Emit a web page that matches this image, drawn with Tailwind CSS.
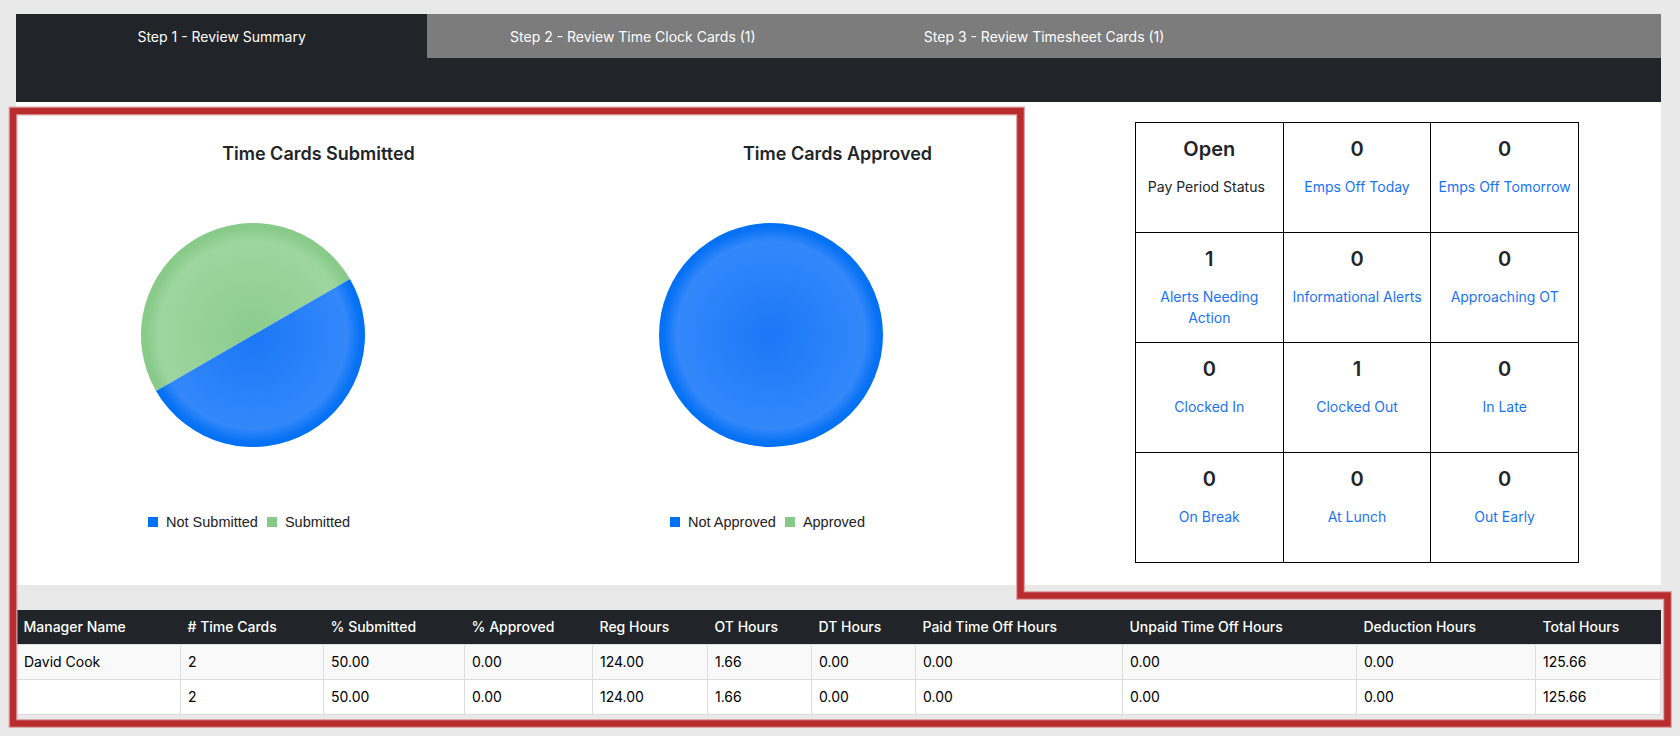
<!DOCTYPE html>
<html lang="en">
<head>
    <meta charset="UTF-8">
    <title>Review Summary</title>
    <script src="https://cdn.jsdelivr.net/npm/@tailwindcss/browser@4"></script>
</head>
<body class="relative h-[736px] overflow-hidden bg-[#e9e9e9] pl-[16px] pr-[19px] pt-[14px] font-['Inter',sans-serif] text-[14px] text-[#212529]">
    <!-- Steps -->
    <div class="bg-[#212529]">
        <div class="grid h-[44px] grid-cols-4 bg-[#7c7c7c] text-white">
            <div class="flex items-center justify-center bg-[#212529]">Step 1 - Review Summary</div>
            <div class="flex items-center justify-center">Step 2 - Review Time Clock Cards (1)</div>
            <div class="flex items-center justify-center">Step 3 - Review Timesheet Cards (1)</div>
            <div></div>
        </div>
        <div class="h-[44px]"></div>
    </div>

    <!-- Summary panel -->
    <div class="flex h-[483px] bg-white">
        <div class="w-[519px] pt-[41px]">
            <h3 class="pl-[86px] text-center text-[18px] leading-[22px] font-semibold">Time Cards Submitted</h3>
            <svg class="ml-[125px] mt-[58px]" width="224" height="224" viewBox="0 0 224 224">
                <defs>
                    <radialGradient id="blue1" gradientUnits="userSpaceOnUse" cx="112" cy="112" r="112">
                        <stop offset="0" stop-color="#1c77f7"/>
                        <stop offset="0.84" stop-color="#3388fa"/>
                        <stop offset="0.95" stop-color="#0a73f5"/>
                        <stop offset="1" stop-color="#0070f5"/>
                    </radialGradient>
                    <radialGradient id="green1" gradientUnits="userSpaceOnUse" cx="112" cy="112" r="112">
                        <stop offset="0" stop-color="#8bcc8c"/>
                        <stop offset="0.84" stop-color="#9ed6a0"/>
                        <stop offset="0.95" stop-color="#8acb8b"/>
                        <stop offset="1" stop-color="#87ca87"/>
                    </radialGradient>
                </defs>
                <path d="M112 112L209 56A112 112 0 0 0 15 168Z" fill="url(#green1)"/>
                <path d="M112 112L209 56A112 112 0 0 1 15 168Z" fill="url(#blue1)"/>
            </svg>
            <div class="ml-[132px] mt-[65px] flex items-center font-['Liberation_Sans',sans-serif] text-[14.5px] leading-[20px] text-[#222]">
                <span class="mr-[8px] h-[10px] w-[10px] bg-[#0070f5]"></span><span>Not Submitted</span>
                <span class="ml-[9px] mr-[8px] h-[10px] w-[10px] bg-[#87ca87]"></span><span>Submitted</span>
            </div>
        </div>
        <div class="w-[489px] pt-[41px]">
            <h3 class="pl-[116px] text-center text-[18px] leading-[22px] font-semibold">Time Cards Approved</h3>
            <svg class="ml-[124px] mt-[58px]" width="224" height="224" viewBox="0 0 224 224">
                <defs>
                    <radialGradient id="blue2" gradientUnits="userSpaceOnUse" cx="112" cy="112" r="112">
                        <stop offset="0" stop-color="#1c77f7"/>
                        <stop offset="0.84" stop-color="#3388fa"/>
                        <stop offset="0.95" stop-color="#0a73f5"/>
                        <stop offset="1" stop-color="#0070f5"/>
                    </radialGradient>
                </defs>
                <circle cx="112" cy="112" r="112" fill="url(#blue2)"/>
            </svg>
            <div class="ml-[135px] mt-[65px] flex items-center font-['Liberation_Sans',sans-serif] text-[14.5px] leading-[20px] text-[#222]">
                <span class="mr-[8px] h-[10px] w-[10px] bg-[#0070f5]"></span><span>Not Approved</span>
                <span class="ml-[9px] mr-[8px] h-[10px] w-[10px] bg-[#87ca87]"></span><span>Approved</span>
            </div>
        </div>

        <!-- Counts -->
        <div class="ml-[111px] mt-[20px] grid h-[441px] w-[444px] grid-cols-3 grid-rows-4 border-t border-l border-black text-center">
            <div class="border-r border-b border-black px-1 pt-[13px]"><div class="text-[20px] leading-[26px] font-semibold">Open</div><div class="mt-[14px] pr-[6px] leading-[21px]">Pay Period Status</div></div>
            <div class="border-r border-b border-black px-1 pt-[13px]"><div class="text-[20px] leading-[26px] font-semibold">0</div><a class="mt-[14px] block leading-[21px] text-[#1a73f5]">Emps Off Today</a></div>
            <div class="border-r border-b border-black px-1 pt-[13px]"><div class="text-[20px] leading-[26px] font-semibold">0</div><a class="mt-[14px] block leading-[21px] text-[#1a73f5]">Emps Off Tomorrow</a></div>
            <div class="border-r border-b border-black px-1 pt-[13px]"><div class="text-[20px] leading-[26px] font-semibold">1</div><a class="mt-[14px] block leading-[21px] text-[#1a73f5]">Alerts Needing Action</a></div>
            <div class="border-r border-b border-black px-1 pt-[13px]"><div class="text-[20px] leading-[26px] font-semibold">0</div><a class="mt-[14px] block leading-[21px] text-[#1a73f5]">Informational Alerts</a></div>
            <div class="border-r border-b border-black px-1 pt-[13px]"><div class="text-[20px] leading-[26px] font-semibold">0</div><a class="mt-[14px] block leading-[21px] text-[#1a73f5]">Approaching OT</a></div>
            <div class="border-r border-b border-black px-1 pt-[13px]"><div class="text-[20px] leading-[26px] font-semibold">0</div><a class="mt-[14px] block leading-[21px] text-[#1a73f5]">Clocked In</a></div>
            <div class="border-r border-b border-black px-1 pt-[13px]"><div class="text-[20px] leading-[26px] font-semibold">1</div><a class="mt-[14px] block leading-[21px] text-[#1a73f5]">Clocked Out</a></div>
            <div class="border-r border-b border-black px-1 pt-[13px]"><div class="text-[20px] leading-[26px] font-semibold">0</div><a class="mt-[14px] block leading-[21px] text-[#1a73f5]">In Late</a></div>
            <div class="border-r border-b border-black px-1 pt-[13px]"><div class="text-[20px] leading-[26px] font-semibold">0</div><a class="mt-[14px] block leading-[21px] text-[#1a73f5]">On Break</a></div>
            <div class="border-r border-b border-black px-1 pt-[13px]"><div class="text-[20px] leading-[26px] font-semibold">0</div><a class="mt-[14px] block leading-[21px] text-[#1a73f5]">At Lunch</a></div>
            <div class="border-r border-b border-black px-1 pt-[13px]"><div class="text-[20px] leading-[26px] font-semibold">0</div><a class="mt-[14px] block leading-[21px] text-[#1a73f5]">Out Early</a></div>
        </div>
    </div>

    <!-- Manager table -->
    <table class="mt-[25px] w-[1645px] table-fixed border-collapse text-left text-black">
        <thead class="bg-[#212529] text-white">
            <tr class="h-[34px]">
                <th class="w-[164px] px-[7px] font-medium">Manager Name</th>
                <th class="w-[143px] px-[7px] font-medium"># Time Cards</th>
                <th class="w-[141px] px-[7px] font-medium">% Submitted</th>
                <th class="w-[128px] px-[7px] font-medium">% Approved</th>
                <th class="w-[115px] px-[7px] font-medium">Reg Hours</th>
                <th class="w-[104px] px-[7px] font-medium">OT Hours</th>
                <th class="w-[104px] px-[7px] font-medium">DT Hours</th>
                <th class="w-[207px] px-[7px] font-medium">Paid Time Off Hours</th>
                <th class="w-[234px] px-[7px] font-medium">Unpaid Time Off Hours</th>
                <th class="w-[179px] px-[7px] font-medium">Deduction Hours</th>
                <th class="px-[7px] font-medium">Total Hours</th>
            </tr>
        </thead>
        <tbody>
            <tr class="h-[35px] bg-[#f9f9f9]">
                <td class="border border-[#ddd] px-[7px]">David Cook</td>
                <td class="border border-[#ddd] px-[7px]">2</td>
                <td class="border border-[#ddd] px-[7px]">50.00</td>
                <td class="border border-[#ddd] px-[7px]">0.00</td>
                <td class="border border-[#ddd] px-[7px]">124.00</td>
                <td class="border border-[#ddd] px-[7px]">1.66</td>
                <td class="border border-[#ddd] px-[7px]">0.00</td>
                <td class="border border-[#ddd] px-[7px]">0.00</td>
                <td class="border border-[#ddd] px-[7px]">0.00</td>
                <td class="border border-[#ddd] px-[7px]">0.00</td>
                <td class="border border-[#ddd] px-[7px]">125.66</td>
            </tr>
            <tr class="h-[35px] bg-white">
                <td class="border border-[#ddd] px-[7px]"></td>
                <td class="border border-[#ddd] px-[7px]">2</td>
                <td class="border border-[#ddd] px-[7px]">50.00</td>
                <td class="border border-[#ddd] px-[7px]">0.00</td>
                <td class="border border-[#ddd] px-[7px]">124.00</td>
                <td class="border border-[#ddd] px-[7px]">1.66</td>
                <td class="border border-[#ddd] px-[7px]">0.00</td>
                <td class="border border-[#ddd] px-[7px]">0.00</td>
                <td class="border border-[#ddd] px-[7px]">0.00</td>
                <td class="border border-[#ddd] px-[7px]">0.00</td>
                <td class="border border-[#ddd] px-[7px]">125.66</td>
            </tr>
        </tbody>
    </table>

    <!-- Red highlight drawn over the screenshot -->
    <svg class="pointer-events-none absolute top-0 left-0" width="1680" height="736" viewBox="0 0 1680 736" fill="none">
        <path d="M13 111H1020.5V595.5H1667.5V723.5H13Z" stroke="#d9a9a9" stroke-width="9"/>
        <path d="M13 111H1020.5V595.5H1667.5V723.5H13Z" stroke="#b92b2c" stroke-width="6.5"/>
    </svg>
</body>
</html>
